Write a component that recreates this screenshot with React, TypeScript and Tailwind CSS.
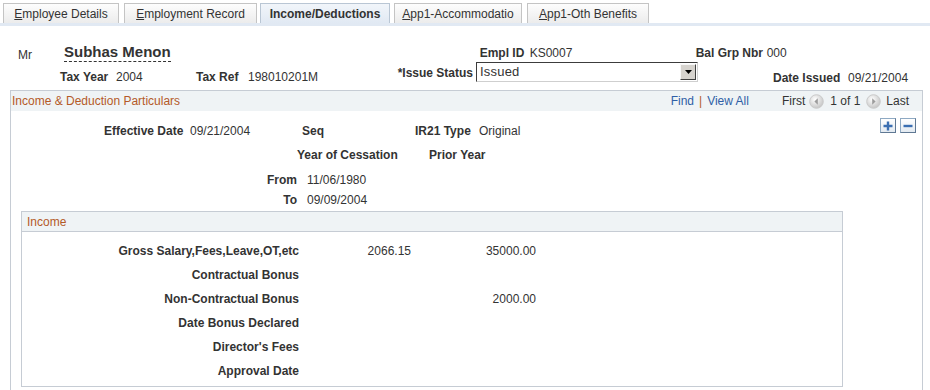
import type { ReactNode } from 'react'

const LABEL = 'font-bold text-[#333]'
const VALUE = 'text-[#333]'

const tabs = [
  { hot: 'E', rest: 'mployee Details', cls: 'w-[116px]' },
  { hot: 'E', rest: 'mployment Record', cls: 'ml-[5px] w-[133px]' },
  { hot: '', rest: 'Income/Deductions', cls: 'ml-[3px] w-[130px]', active: true },
  { hot: 'A', rest: 'pp1-Accommodatio', cls: 'ml-[4px] w-[128px]' },
  { hot: 'A', rest: 'pp1-Oth Benefits', cls: 'ml-[5px] w-[122px]' },
]

const income: Array<[string, string, string]> = [
  ['Gross Salary,Fees,Leave,OT,etc', '2066.15', '35000.00'],
  ['Contractual Bonus', '', ''],
  ['Non-Contractual Bonus', '', '2000.00'],
  ['Date Bonus Declared', '', ''],
  ["Director's Fees", '', ''],
  ['Approval Date', '', ''],
]

const NavCircle = ({ dir }: { dir: 'left' | 'right' }) => (
  <svg width="15" height="15" viewBox="0 0 15 15">
    <defs>
      <radialGradient id={`nav-${dir}`} cx="40%" cy="35%" r="70%">
        <stop offset="0" stopColor="#ffffff" />
        <stop offset="1" stopColor="#c2c2c2" />
      </radialGradient>
    </defs>
    <circle cx="7.5" cy="7.5" r="6.8" fill={`url(#nav-${dir})`} stroke="#cacaca" />
    <path d={dir === 'left' ? 'M8.8 4.3 L5.4 7.5 L8.8 10.7 Z' : 'M6.2 4.3 L9.6 7.5 L6.2 10.7 Z'} fill="#9c9c9c" />
  </svg>
)

const RowButton = ({ children }: { children: ReactNode }) => (
  <span className="flex h-[15px] w-[16px] items-center justify-center border border-[#8ea9c3] border-r-[#5f7893] border-b-[#5f7893] bg-gradient-to-b from-white to-[#e3eaf1]">
    {children}
  </span>
)

export default function App() {
  return (
    <div className="h-[390px] w-[930px] overflow-hidden bg-white font-['Liberation_Sans',Arial,sans-serif] text-[12px] leading-[14px] text-[#333]">
      {/* tabs */}
      <div className="flex h-[23px] items-end pl-[3px]">
        {tabs.map(tab => (
          <div
            key={tab.rest}
            className={`${tab.cls} flex h-[20px] items-center justify-center border border-b-0 ${
              tab.active
                ? 'border-[#b9c6d4] bg-gradient-to-b from-[#f1f5fa] to-[#e1e9f3] font-bold'
                : 'border-[#c4c4c4] bg-gradient-to-b from-[#fdfdfd] to-[#ececec]'
            }`}
          >
            {tab.hot && <span className="underline underline-offset-1">{tab.hot}</span>}
            {tab.rest}
          </div>
        ))}
      </div>
      <div className="h-[3px] bg-[#e1e9f3]" />

      {/* header row 1 */}
      <div className="mt-[14px] flex h-[22px] items-start pl-[18px]">
        <span className="mt-[8px] w-[46px]">Mr</span>
        <span className="mt-[3px] border-b border-dashed border-[#333] text-[15px] leading-[18px] font-bold">Subhas Menon</span>
        <span className={`${LABEL} ml-[309px] mt-[6px] w-[50px]`}>Empl ID</span>
        <span className={`${VALUE} mt-[6px] w-[166px]`}>KS0007</span>
        <span className={`${LABEL} mt-[6px] w-[71px]`}>Bal Grp Nbr</span>
        <span className={`${VALUE} mt-[6px]`}>000</span>
      </div>

      {/* header row 2 */}
      <div className="flex h-[21px] items-start pl-[60px]">
        <span className={`${LABEL} mt-[8px] w-[56px]`}>Tax Year</span>
        <span className={`${VALUE} mt-[8px] w-[80px]`}>2004</span>
        <span className={`${LABEL} mt-[8px] w-[52px]`}>Tax Ref</span>
        <span className={`${VALUE} mt-[8px] w-[142px]`}>198010201M</span>
        <span className={`${LABEL} mt-[4px] w-[86px] pr-[3px] text-right`}>*Issue Status</span>
        <div className="flex h-[20px] w-[222px] items-center border border-t-[#3c3c3c] border-l-[#3c3c3c] border-r-[#cfcfcf] border-b-[#cfcfcf] bg-white">
          <span className="flex-1 pl-[3px] text-[13px] tracking-[0.2px]">Issued</span>
          <span className="mr-[1px] flex h-[16px] w-[16px] items-center justify-center border border-t-[#f7f7f7] border-l-[#f7f7f7] border-r-[#404040] border-b-[#404040] bg-[#d6d3ce]">
            <svg width="7" height="4" viewBox="0 0 7 4">
              <path d="M0 0h7L3.5 4z" fill="#000" />
            </svg>
          </span>
        </div>
        <span className={`${LABEL} ml-[75px] mt-[9px] w-[75px]`}>Date Issued</span>
        <span className={`${VALUE} mt-[9px]`}>09/21/2004</span>
      </div>

      {/* particulars panel */}
      <div className="ml-[10px] mt-[7px] w-[913px] border border-b-0 border-[#c6ccd4] pb-[20px]">
        <div className="flex h-[20px] items-center bg-[#eff3f5] pl-[1px] text-[#b45a28]">
          <span>Income &amp; Deduction Particulars</span>
          <div className="ml-auto flex items-center pr-[13px] text-[#333]">
            <span className="text-[#2f5fa6]">Find</span>
            <span className="mx-[5px] text-[#b45a28]">|</span>
            <span className="text-[#2f5fa6]">View All</span>
            <span className="ml-[33px]">First</span>
            <span className="ml-[4px]"><NavCircle dir="left" /></span>
            <span className="ml-[6px]">1 of 1</span>
            <span className="ml-[6px]"><NavCircle dir="right" /></span>
            <span className="ml-[5px]">Last</span>
          </div>
        </div>

        <div className="flex items-start pt-[7px]">
          <span className={`${LABEL} ml-[93px] mt-[6px] w-[86px]`}>Effective Date</span>
          <span className={`${VALUE} mt-[6px] w-[112px]`}>09/21/2004</span>
          <span className={`${LABEL} mt-[6px] w-[113px]`}>Seq</span>
          <span className={`${LABEL} mt-[6px] w-[64px]`}>IR21 Type</span>
          <span className={`${VALUE} mt-[6px]`}>Original</span>
          <div className="ml-auto mr-[6px] flex gap-[4px]">
            <RowButton>
              <svg width="10" height="10" viewBox="0 0 10 10">
                <path d="M5 0.5v9M0.5 5h9" stroke="#3b6fb2" strokeWidth="2.4" />
              </svg>
            </RowButton>
            <RowButton>
              <svg width="10" height="10" viewBox="0 0 10 10">
                <path d="M0.5 5h9" stroke="#3b6fb2" strokeWidth="2.4" />
              </svg>
            </RowButton>
          </div>
        </div>

        <div className="mt-[10px] flex">
          <span className={`${LABEL} ml-[286px] w-[132px]`}>Year of Cessation</span>
          <span className={LABEL}>Prior Year</span>
        </div>

        <div className="mt-[11px] flex">
          <span className={`${LABEL} w-[286px] text-right`}>From</span>
          <span className={`${VALUE} ml-[10px]`}>11/06/1980</span>
        </div>
        <div className="mt-[6px] flex">
          <span className={`${LABEL} w-[286px] text-right`}>To</span>
          <span className={`${VALUE} ml-[10px]`}>09/09/2004</span>
        </div>

        {/* income box */}
        <div className="ml-[10px] mt-[4px] w-[822px] border border-[#c6ccd4] pb-[3px]">
          <div className="flex h-[20px] items-center border-b border-[#c6ccd4] bg-[#eff3f5] pl-[5px] text-[#b45a28]">
            Income
          </div>
          <div className="pt-[7px]">
            {income.map(([label, a, b]) => (
              <div key={label} className="flex h-[24px] items-center">
                <span className={`${LABEL} w-[277px] text-right`}>{label}</span>
                <span className={`${VALUE} w-[112px] text-right`}>{a}</span>
                <span className={`${VALUE} w-[125px] text-right`}>{b}</span>
              </div>
            ))}
          </div>
        </div>
      </div>
    </div>
  )
}
